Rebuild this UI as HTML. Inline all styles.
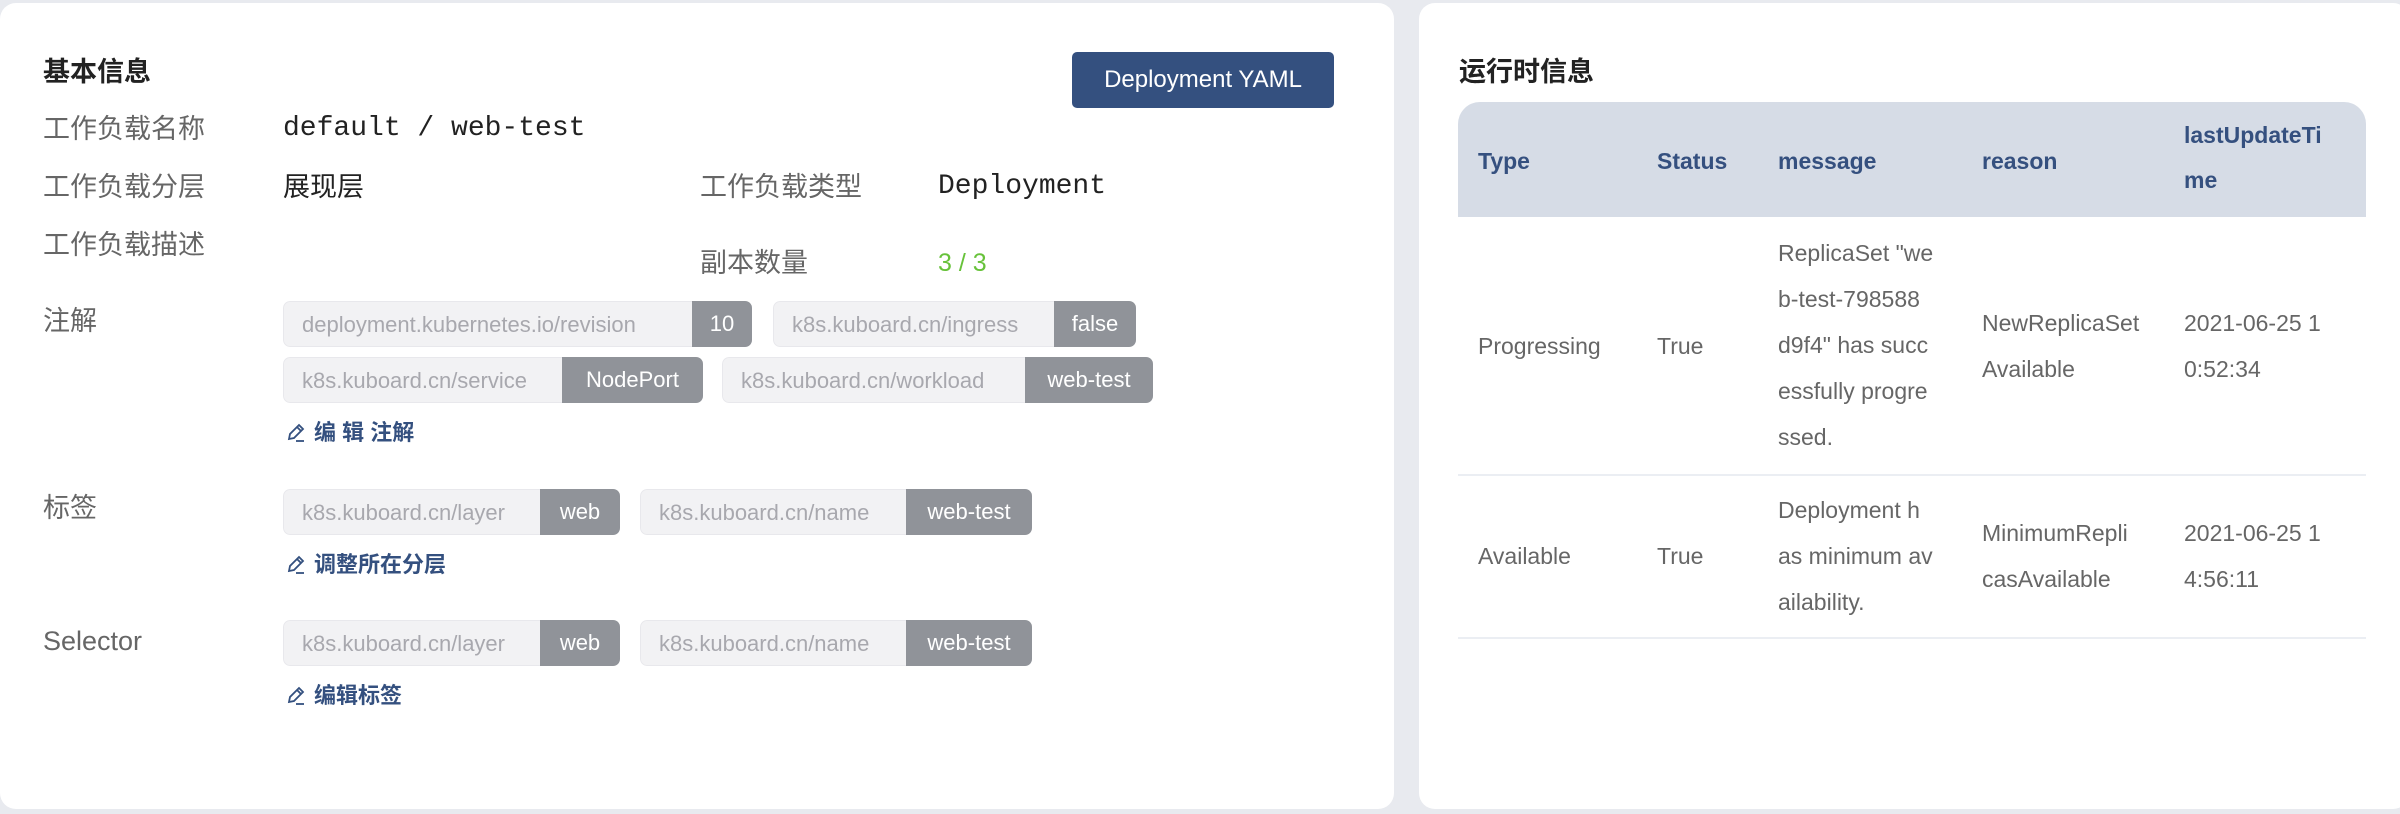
<!DOCTYPE html>
<html><head><meta charset="utf-8"><style>
*{margin:0;padding:0;box-sizing:border-box}
body{width:2400px;height:814px;background:#e8eaef;font-family:"Liberation Sans","Noto Sans CJK SC",sans-serif;position:relative;overflow:hidden}
.panel{position:absolute;background:#fff;border-radius:16px}
.a{position:absolute;white-space:nowrap}
.h{font-size:27px;font-weight:bold;color:#222;line-height:30px}
.lb{font-size:27px;color:#666;line-height:30px}
.v{font-size:27px;color:#222;line-height:30px}
.mono{font-family:"Liberation Mono","DejaVu Sans Mono",monospace;font-size:28px;color:#222;line-height:30px}
.tag{position:absolute;height:46px;display:flex;border-radius:7px;overflow:hidden;font-size:22px;line-height:46px}
.tag .k{background:#f2f2f4;color:#a8a8ae;padding-left:18px;border:1px solid #e8e8ec;border-right:none;border-radius:7px 0 0 7px}
.tag .vv{background:#909399;color:#fff;text-align:center}
.lnk{font-size:22px;color:#34507f;font-weight:bold;line-height:30px;display:flex;align-items:center;gap:8px}
.th{position:absolute;font-size:23px;font-weight:bold;color:#35507f;line-height:45px}
.td{position:absolute;font-size:23px;color:#666;line-height:46px}
</style></head><body>
<div class="panel" style="left:0;top:3px;width:1394px;height:806px"></div>
<div class="panel" style="left:1419px;top:3px;width:990px;height:806px"></div>

<div class="a h" style="left:43px;top:57px">基本信息</div>
<div class="a" style="left:1072px;top:52px;width:262px;height:56px;background:#34507f;border-radius:5px;color:#fff;font-size:24px;line-height:56px;text-align:center">Deployment YAML</div>

<div class="a lb" style="left:43px;top:114px">工作负载名称</div>
<div class="a mono" style="left:283px;top:114px">default / web-test</div>
<div class="a lb" style="left:43px;top:172px">工作负载分层</div>
<div class="a v" style="left:283px;top:172px">展现层</div>
<div class="a lb" style="left:700px;top:172px">工作负载类型</div>
<div class="a mono" style="left:938px;top:172px">Deployment</div>
<div class="a lb" style="left:43px;top:230px">工作负载描述</div>
<div class="a lb" style="left:700px;top:248px">副本数量</div>
<div class="a v" style="left:938px;top:248px;color:#67c23a;font-size:25px">3 / 3</div>

<div class="a lb" style="left:43px;top:306px">注解</div>
<div class="tag" style="left:283px;top:301px;width:469px"><span class="k" style="width:409px">deployment.kubernetes.io/revision</span><span class="vv" style="width:60px">10</span></div>
<div class="tag" style="left:773px;top:301px;width:363px"><span class="k" style="width:281px">k8s.kuboard.cn/ingress</span><span class="vv" style="width:82px">false</span></div>
<div class="tag" style="left:283px;top:357px;width:420px"><span class="k" style="width:279px">k8s.kuboard.cn/service</span><span class="vv" style="width:141px">NodePort</span></div>
<div class="tag" style="left:722px;top:357px;width:431px"><span class="k" style="width:303px">k8s.kuboard.cn/workload</span><span class="vv" style="width:128px">web-test</span></div>
<div class="a lnk" style="left:286px;top:418px"><svg width="20" height="22" viewBox="0 0 20 22"><path d="M3 17 L4 12 L13 3 L17 7 L8 16 Z M11 5 L15 9" fill="none" stroke="#34507f" stroke-width="1.8"/><path d="M10 19 H18" stroke="#34507f" stroke-width="1.8"/></svg>编 辑 注解</div>

<div class="a lb" style="left:43px;top:493px">标签</div>
<div class="tag" style="left:283px;top:489px;width:337px"><span class="k" style="width:257px">k8s.kuboard.cn/layer</span><span class="vv" style="width:80px">web</span></div>
<div class="tag" style="left:640px;top:489px;width:392px"><span class="k" style="width:266px">k8s.kuboard.cn/name</span><span class="vv" style="width:126px">web-test</span></div>
<div class="a lnk" style="left:286px;top:550px"><svg width="20" height="22" viewBox="0 0 20 22"><path d="M3 17 L4 12 L13 3 L17 7 L8 16 Z M11 5 L15 9" fill="none" stroke="#34507f" stroke-width="1.8"/><path d="M10 19 H18" stroke="#34507f" stroke-width="1.8"/></svg>调整所在分层</div>

<div class="a lb" style="left:43px;top:626px">Selector</div>
<div class="tag" style="left:283px;top:620px;width:337px"><span class="k" style="width:257px">k8s.kuboard.cn/layer</span><span class="vv" style="width:80px">web</span></div>
<div class="tag" style="left:640px;top:620px;width:392px"><span class="k" style="width:266px">k8s.kuboard.cn/name</span><span class="vv" style="width:126px">web-test</span></div>
<div class="a lnk" style="left:286px;top:681px"><svg width="20" height="22" viewBox="0 0 20 22"><path d="M3 17 L4 12 L13 3 L17 7 L8 16 Z M11 5 L15 9" fill="none" stroke="#34507f" stroke-width="1.8"/><path d="M10 19 H18" stroke="#34507f" stroke-width="1.8"/></svg>编辑标签</div>

<div class="a h" style="left:1459px;top:57px">运行时信息</div>
<div class="a" style="left:1458px;top:102px;width:908px;height:115px;background:#d6dce6;border-radius:22px 22px 0 0"></div>
<div class="th" style="left:1478px;top:139px">Type</div>
<div class="th" style="left:1657px;top:139px">Status</div>
<div class="th" style="left:1778px;top:139px">message</div>
<div class="th" style="left:1982px;top:139px">reason</div>
<div class="th" style="left:2184px;top:113px">lastUpdateTi<br>me</div>

<div class="td" style="left:1478px;top:323px">Progressing</div>
<div class="td" style="left:1657px;top:323px">True</div>
<div class="td" style="left:1778px;top:230px">ReplicaSet "we<br>b-test-798588<br>d9f4" has succ<br>essfully progre<br>ssed.</div>
<div class="td" style="left:1982px;top:300px">NewReplicaSet<br>Available</div>
<div class="td" style="left:2184px;top:300px">2021-06-25 1<br>0:52:34</div>
<div class="a" style="left:1458px;top:474px;width:908px;height:2px;background:#ebeef3"></div>

<div class="td" style="left:1478px;top:533px">Available</div>
<div class="td" style="left:1657px;top:533px">True</div>
<div class="td" style="left:1778px;top:487px">Deployment h<br>as minimum av<br>ailability.</div>
<div class="td" style="left:1982px;top:510px">MinimumRepli<br>casAvailable</div>
<div class="td" style="left:2184px;top:510px">2021-06-25 1<br>4:56:11</div>
<div class="a" style="left:1458px;top:637px;width:908px;height:2px;background:#ebeef3"></div>
</body></html>
